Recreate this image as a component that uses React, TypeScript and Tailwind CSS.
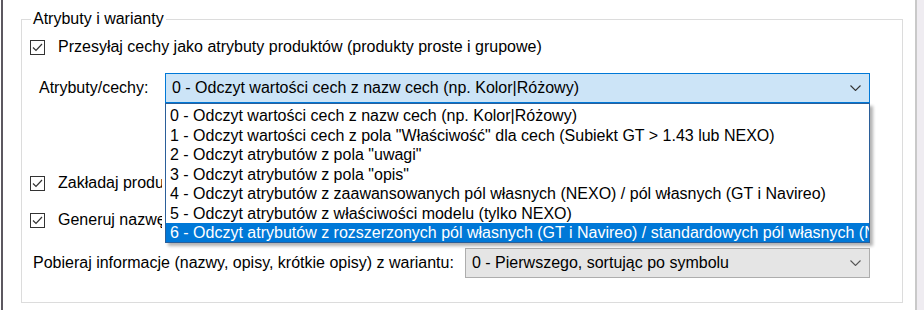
import React from 'react';

const font = { fontFamily: '"Liberation Sans", Arial, sans-serif' };

const options = [
  '0 - Odczyt wartości cech z nazw cech (np. Kolor|Różowy)',
  '1 - Odczyt wartości cech z pola "Właściwość" dla cech (Subiekt GT > 1.43 lub NEXO)',
  '2 - Odczyt atrybutów z pola "uwagi"',
  '3 - Odczyt atrybutów z pola "opis"',
  '4 - Odczyt atrybutów z zaawansowanych pól własnych (NEXO) / pól własnych (GT i Navireo)',
  '5 - Odczyt atrybutów z właściwości modelu (tylko NEXO)',
  '6 - Odczyt atrybutów z rozszerzonych pól własnych (GT i Navireo) / standardowych pól własnych (NEXO)',
];

function Checkbox() {
  return (
    <div className="w-[15px] h-[15px] border border-[#333] bg-white flex items-center justify-center shrink-0">
      <svg width="11" height="9" viewBox="0 0 11 9" fill="none">
        <path d="M1 4.5 L4 7.5 L10 1" stroke="#333" strokeWidth="1.2" />
      </svg>
    </div>
  );
}

function Chevron({ color }: { color: string }) {
  return (
    <svg width="11" height="6" viewBox="0 0 11 6" fill="none">
      <path d="M0.5 0.5 L5.5 5.5 L10.5 0.5" stroke={color} strokeWidth="1.1" />
    </svg>
  );
}

function CheckRow({ label, className, clip }: { label: string; className: string; clip?: boolean }) {
  return (
    <div className={`flex items-center h-[20px] pl-[8px] ${className}`}>
      <Checkbox />
      <span
        className={`ml-[13px] whitespace-nowrap ${clip ? 'w-[104px] overflow-hidden' : ''}`}
      >
        {label}
      </span>
    </div>
  );
}

export default function App() {
  return (
    <div
      className="w-[924px] h-[310px] bg-white flex text-[16px] text-black leading-[20px] overflow-hidden"
      style={font}
    >
      <div className="w-[1px] shrink-0" />
      <div className="w-[2px] shrink-0 bg-[#5c5860]" />
      <div className="flex-1 relative pl-[18px] pt-[19px]">
        <div className="relative w-[882px] h-[284px] border border-[#dcdcdc]">
          <span className="absolute -top-[11px] left-[9px] bg-white px-[2px] whitespace-nowrap">
            Atrybuty i warianty
          </span>

          <CheckRow
            className="mt-[17px]"
            label="Przesyłaj cechy jako atrybuty produktów (produkty proste i grupowe)"
          />

          <div className="flex items-center mt-[16px] h-[30px]">
            <span className="pl-[17px] w-[143px] shrink-0 whitespace-nowrap">Atrybuty/cechy:</span>
            <div className="w-[705px] h-[30px] border border-[#0078d7] bg-[#cce4f7] flex items-center justify-between pl-[6px] pr-[8px]">
              <span className="whitespace-nowrap">{options[0]}</span>
              <Chevron color="#333" />
            </div>
          </div>

          <CheckRow clip className="mt-[70px]" label="Zakładaj produkty wariantowe dla towarów z cechami" />
          <CheckRow clip className="mt-[17px]" label="Generuj nazwę wariantu na podstawie cech" />

          <div className="flex items-center mt-[18px] h-[30px]">
            <span className="pl-[11px] w-[443px] shrink-0 whitespace-nowrap">
              Pobieraj informacje (nazwy, opisy, krótkie opisy) z wariantu:
            </span>
            <div className="w-[405px] h-[30px] border border-[#adadad] bg-[#e5e5e5] flex items-center justify-between pl-[6px] pr-[8px]">
              <span className="whitespace-nowrap">0 - Pierwszego, sortując po symbolu</span>
              <Chevron color="#555" />
            </div>
          </div>

          <div className="absolute left-[143px] top-[83px] w-[705px] h-[140px] bg-white border border-[#2b5f99] shadow-[3px_3px_3px_rgba(0,0,0,0.3)] pt-[2px] overflow-hidden">
            {options.map((o, i) => (
              <div
                key={i}
                className={`h-[19.5px] leading-[19.5px] pl-[4px] whitespace-nowrap overflow-hidden ${
                  i === 6 ? 'bg-[#0078d7] text-white' : ''
                }`}
              >
                {o}
              </div>
            ))}
          </div>
        </div>
      </div>
      <div className="w-[2px] shrink-0 bg-[#c9c9c9]" />
      <div className="w-[7px] shrink-0 bg-[#efecf1]" />
    </div>
  );
}
